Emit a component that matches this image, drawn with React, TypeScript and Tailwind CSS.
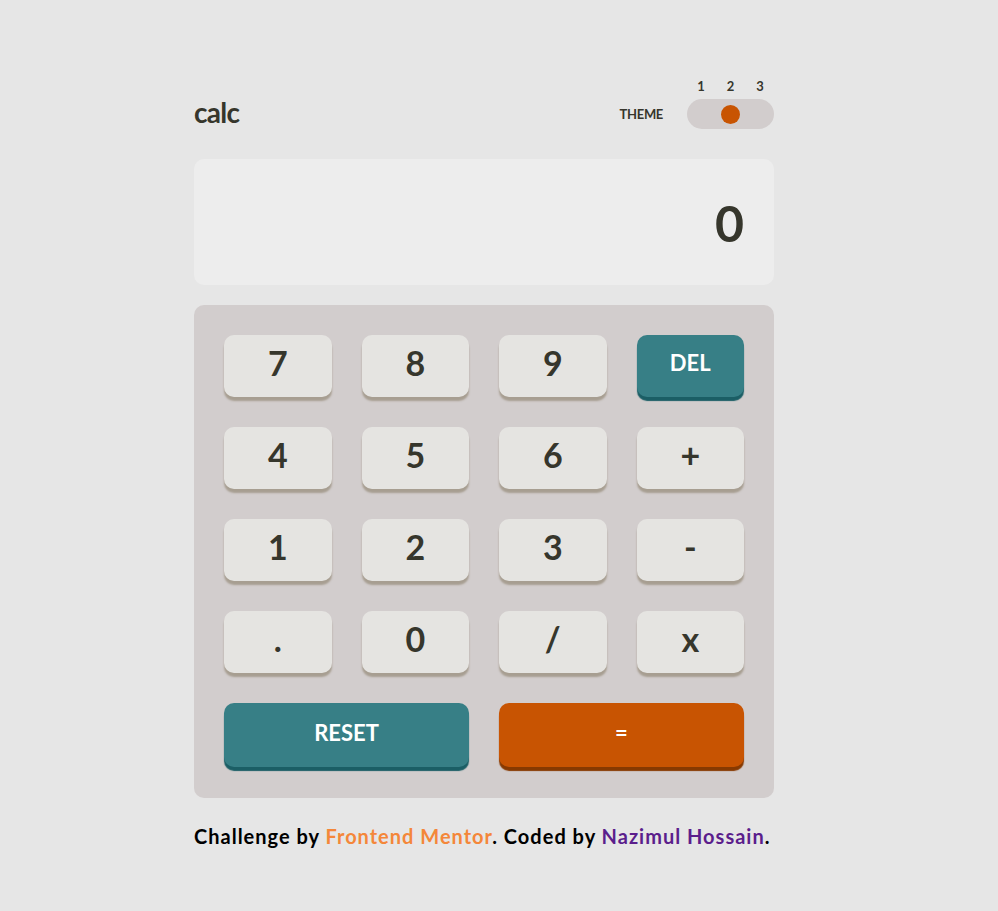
import React, { useState } from "react";

// Keypad layout: the last row (RESET / =) spans two columns each
const keys: { label: string; kind: "num" | "del" }[] = [
  { label: "7", kind: "num" },
  { label: "8", kind: "num" },
  { label: "9", kind: "num" },
  { label: "DEL", kind: "del" },
  { label: "4", kind: "num" },
  { label: "5", kind: "num" },
  { label: "6", kind: "num" },
  { label: "+", kind: "num" },
  { label: "1", kind: "num" },
  { label: "2", kind: "num" },
  { label: "3", kind: "num" },
  { label: "-", kind: "num" },
  { label: ".", kind: "num" },
  { label: "0", kind: "num" },
  { label: "/", kind: "num" },
  { label: "x", kind: "num" },
];

const App: React.FC = () => {
  const [display] = useState("0");

  return (
    <div className="min-h-[911px] bg-[#e6e6e6] pt-[79px] font-['Lato','Liberation_Sans',sans-serif] font-bold text-[#36362c]">
      <div className="ml-[194px] w-[580px]">
        {/* Header */}
        <header>
          <div className="flex justify-end">
            <div className="flex w-[87px] justify-between px-[10px] text-[13px] leading-[14px]">
              <span className="w-[8px] text-center">1</span>
              <span className="w-[8px] text-center">2</span>
              <span className="w-[8px] text-center">3</span>
            </div>
          </div>
          <div className="mt-[6px] flex h-[30px] items-center justify-between">
            <h1 className="self-start text-[28px] leading-[26px] tracking-tight">calc</h1>
            <div className="flex items-center gap-[24px]">
              <span className="text-[13px] leading-none tracking-tight">THEME</span>
              <div className="flex h-[30px] w-[87px] items-center justify-center rounded-full bg-[#d2cdcd]">
                <span className="size-[19px] rounded-full bg-[#c85402]" />
              </div>
            </div>
          </div>
        </header>

        {/* Screen */}
        <div className="mt-[30px] flex h-[126px] items-center justify-end rounded-[10px] bg-[#ededed] px-[30px] pt-[2px] text-[50px] leading-none">
          {display}
        </div>

        {/* Keypad */}
        <div className="mt-[20px] grid grid-cols-4 gap-[30px] rounded-[10px] bg-[#d2cdcd] p-[30px] pb-[31px]">
          {keys.map((k) =>
            k.kind === "del" ? (
              <button
                key={k.label}
                className="flex h-[62px] items-center justify-center rounded-[10px] bg-[#377f86] pb-[6px] text-[22px] leading-none text-white shadow-[0_4px_1px_#1b5e65]"
              >
                {k.label}
              </button>
            ) : (
              <button
                key={k.label}
                className="flex h-[62px] items-center justify-center rounded-[10px] bg-[#e5e4e1] pb-[6px] text-[34px] leading-none shadow-[0_4px_2px_#a79e91]"
              >
                {k.label}
              </button>
            )
          )}
          <button className="col-span-2 flex h-[64px] items-center justify-center rounded-[10px] bg-[#377f86] pb-[4px] text-[22px] leading-none text-white shadow-[0_4px_1px_#1b5e65]">
            RESET
          </button>
          <button className="col-span-2 flex h-[64px] items-center justify-center rounded-[10px] bg-[#c85402] pb-[4px] text-[22px] leading-none text-white shadow-[0_4px_1px_#873901]">
            =
          </button>
        </div>

        {/* Footer */}
        <p className="mt-[27px] whitespace-nowrap text-[20px] leading-[22px] tracking-[1px] text-black">
          Challenge by <span className="text-[#f4873a]">Frontend Mentor</span>. Coded by{" "}
          <span className="text-[#5b1e8c]">Nazimul Hossain</span>.
        </p>
      </div>
    </div>
  );
};

export default App;
